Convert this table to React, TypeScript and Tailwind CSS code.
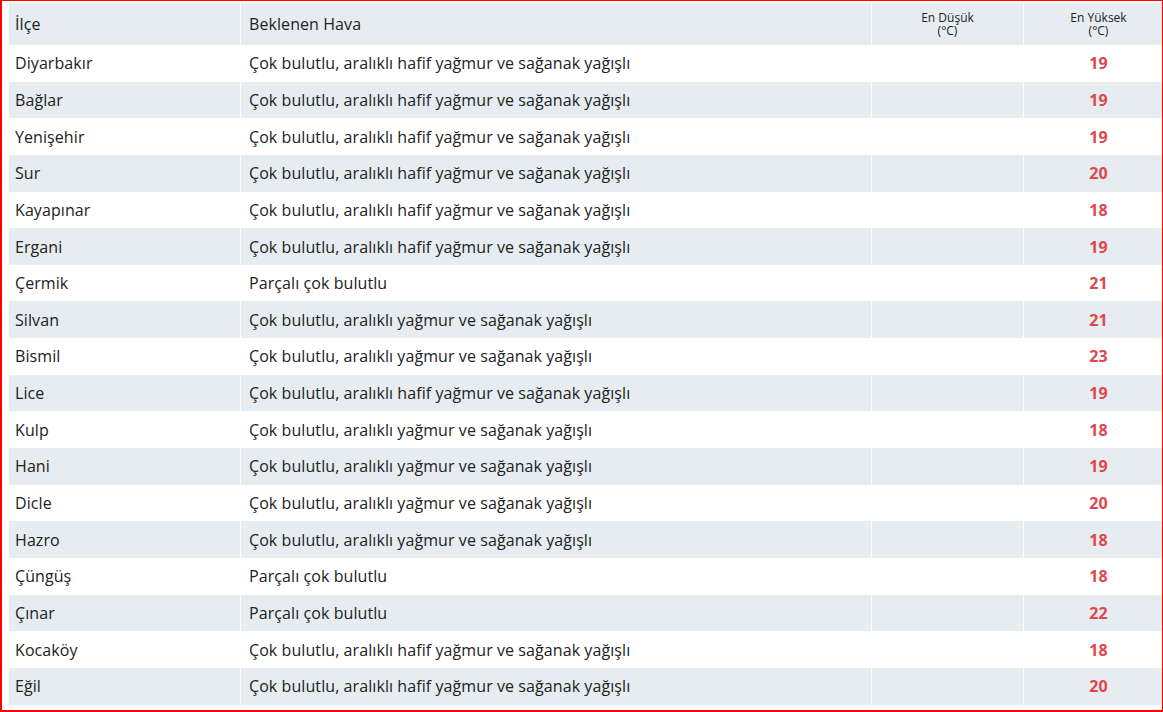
const rows: [string, string, number][] = [
  ["Diyarbakır", "Çok bulutlu, aralıklı hafif yağmur ve sağanak yağışlı", 19],
  ["Bağlar", "Çok bulutlu, aralıklı hafif yağmur ve sağanak yağışlı", 19],
  ["Yenişehir", "Çok bulutlu, aralıklı hafif yağmur ve sağanak yağışlı", 19],
  ["Sur", "Çok bulutlu, aralıklı hafif yağmur ve sağanak yağışlı", 20],
  ["Kayapınar", "Çok bulutlu, aralıklı hafif yağmur ve sağanak yağışlı", 18],
  ["Ergani", "Çok bulutlu, aralıklı hafif yağmur ve sağanak yağışlı", 19],
  ["Çermik", "Parçalı çok bulutlu", 21],
  ["Silvan", "Çok bulutlu, aralıklı yağmur ve sağanak yağışlı", 21],
  ["Bismil", "Çok bulutlu, aralıklı yağmur ve sağanak yağışlı", 23],
  ["Lice", "Çok bulutlu, aralıklı hafif yağmur ve sağanak yağışlı", 19],
  ["Kulp", "Çok bulutlu, aralıklı yağmur ve sağanak yağışlı", 18],
  ["Hani", "Çok bulutlu, aralıklı yağmur ve sağanak yağışlı", 19],
  ["Dicle", "Çok bulutlu, aralıklı yağmur ve sağanak yağışlı", 20],
  ["Hazro", "Çok bulutlu, aralıklı yağmur ve sağanak yağışlı", 18],
  ["Çüngüş", "Parçalı çok bulutlu", 18],
  ["Çınar", "Parçalı çok bulutlu", 22],
  ["Kocaköy", "Çok bulutlu, aralıklı hafif yağmur ve sağanak yağışlı", 18],
  ["Eğil", "Çok bulutlu, aralıklı hafif yağmur ve sağanak yağışlı", 20],
];

const cols = "grid grid-cols-[231px_630px_151px_149px] gap-x-px";

export default function App() {
  return (
    <div
      className="w-[1163px] h-[712px] overflow-hidden bg-white border border-l-2 border-b-2 border-[#ff0000] pl-[7px] pt-[2px] text-[#222] text-[16px] tracking-[0.08px]"
      style={{ fontFamily: '"Open Sans", "Liberation Sans", sans-serif' }}
    >
      <div className="w-[1164px]">
        {/* Header */}
        <div className={`${cols} h-[42px]`}>
          <div className="bg-[#e6ecf0] flex items-center px-1.5 pb-px">İlçe</div>
          <div className="bg-[#e6ecf0] flex items-center px-2 pb-px">Beklenen Hava</div>
          <div className="bg-[#e6ecf0] flex flex-col items-center justify-center text-[12px] leading-[13px] tracking-normal pb-px">
            <span>En Düşük</span>
            <span>(°C)</span>
          </div>
          <div className="bg-[#e6ecf0] flex flex-col items-center justify-center text-[12px] leading-[13px] tracking-normal pb-px">
            <span>En Yüksek</span>
            <span>(°C)</span>
          </div>
        </div>

        {/* Rows */}
        {rows.map(([ilce, hava, max], i) => {
          const bg = i % 2 === 0 ? "bg-white" : "bg-[#e6ecf0]";
          return (
            <div key={ilce} className={`${cols} h-[36.65px]`}>
              <div className={`${bg} flex items-center px-1.5`}>{ilce}</div>
              <div className={`${bg} flex items-center px-2`}>{hava}</div>
              <div className={bg}></div>
              <div className={`${bg} flex items-center justify-center font-bold text-[#e0474c]`}>{max}</div>
            </div>
          );
        })}
      </div>
    </div>
  );
}
